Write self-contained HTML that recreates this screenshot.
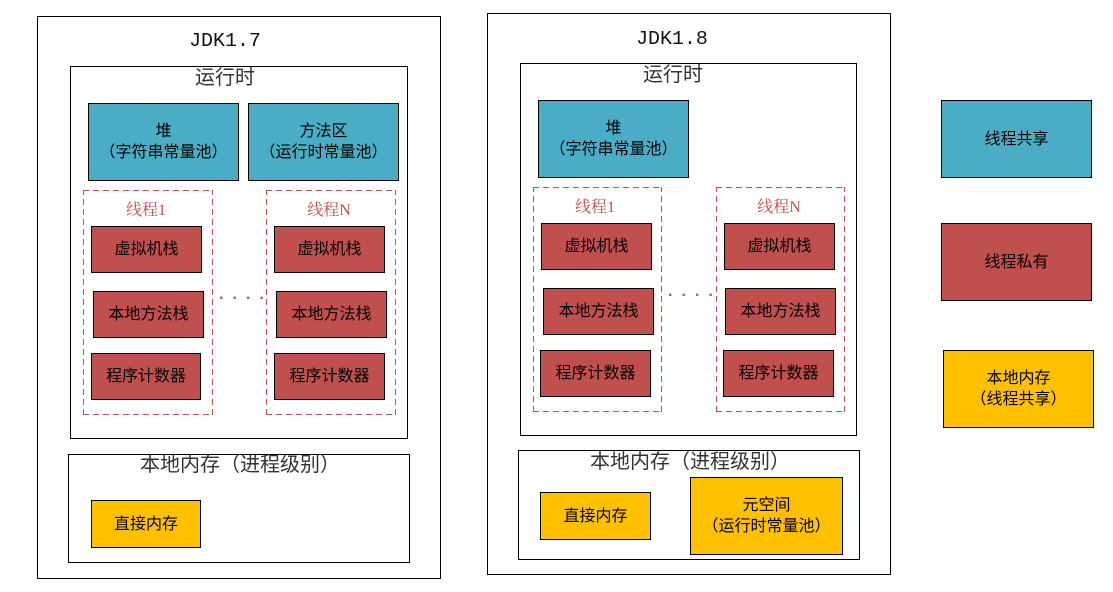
<!DOCTYPE html>
<html><head><meta charset="utf-8"><style>
body{margin:0;width:1113px;height:592px;background:#fff;position:relative;overflow:hidden;font-family:"Liberation Sans","Noto Sans CJK SC",sans-serif;}
div{position:absolute;box-sizing:border-box;}
.b{border:1px solid #000;background:#fff}
.c{display:flex;align-items:center;justify-content:center;text-align:center;font-size:16px;line-height:21px;color:#000;border:1px solid #000}
.bl{background:#4bacc6}.rd{background:#c0504d}.yl{background:#ffc000}
.d{background:
repeating-linear-gradient(90deg,#c0504d 0 6px,transparent 6px 10px) top/100% 1px no-repeat,
repeating-linear-gradient(90deg,#c0504d 0 6px,transparent 6px 10px) bottom/100% 1px no-repeat,
repeating-linear-gradient(0deg,#c0504d 0 6px,transparent 6px 10px) left/1px 100% no-repeat,
repeating-linear-gradient(0deg,#c0504d 0 6px,transparent 6px 10px) right/1px 100% no-repeat;}
.t{font-size:20px;color:#333;text-align:center;white-space:nowrap;line-height:24px}
.j{font-family:"Liberation Mono","Noto Sans CJK SC",monospace;font-size:19px;color:#111;text-align:center;transform:scaleX(1.05)}
.tl{color:#c0504d;font-size:16px;font-family:"Liberation Serif","Noto Serif CJK SC",serif;text-align:center}
.dots{font-size:16px;letter-spacing:9px;color:#c0504d;font-weight:bold}
</style></head><body>
<div class="b" style="left:37px;top:16px;width:404px;height:563px"></div>
<div class="j" style="left:125px;top:30px;width:200px">JDK1.7</div>
<div class="b" style="left:70px;top:66px;width:338px;height:373px"></div>
<div class="t" style="left:125px;top:66px;width:200px">运行时</div>
<div class="c bl" style="left:88px;top:103px;width:151px;height:78px">堆<br>（字符串常量池）</div>
<div class="c bl" style="left:248px;top:103px;width:151px;height:78px">方法区<br>（运行时常量池）</div>
<div class="d" style="left:83px;top:190px;width:130px;height:225px"></div>
<div class="d" style="left:266px;top:190px;width:130px;height:225px"></div>
<div class="tl" style="left:96px;top:197px;width:100px">线程1</div>
<div class="tl" style="left:279px;top:197px;width:100px">线程N</div>
<div class="c rd" style="left:91px;top:226px;width:111px;height:47px">虚拟机栈</div>
<div class="c rd" style="left:93px;top:291px;width:111px;height:47px">本地方法栈</div>
<div class="c rd" style="left:91px;top:353px;width:110px;height:47px">程序计数器</div>
<div class="c rd" style="left:274px;top:226px;width:111px;height:47px">虚拟机栈</div>
<div class="c rd" style="left:276px;top:291px;width:111px;height:47px">本地方法栈</div>
<div class="c rd" style="left:274px;top:353px;width:111px;height:47px">程序计数器</div>
<div class="dots" style="left:219px;top:286px">....</div>
<div class="b" style="left:68px;top:454px;width:342px;height:109px"></div>
<div class="t" style="left:100px;top:453px;width:280px">本地内存（进程级别）</div>
<div class="c yl" style="left:91px;top:500px;width:110px;height:48px">直接内存</div>

<div class="b" style="left:487px;top:13px;width:404px;height:562px"></div>
<div class="j" style="left:572px;top:28px;width:200px">JDK1.8</div>
<div class="b" style="left:520px;top:63px;width:337px;height:373px"></div>
<div class="t" style="left:573px;top:63px;width:200px">运行时</div>
<div class="c bl" style="left:538px;top:100px;width:151px;height:78px">堆<br>（字符串常量池）</div>
<div class="d" style="left:533px;top:187px;width:129px;height:225px"></div>
<div class="d" style="left:716px;top:187px;width:129px;height:225px"></div>
<div class="tl" style="left:545px;top:194px;width:100px">线程1</div>
<div class="tl" style="left:729px;top:194px;width:100px">线程N</div>
<div class="c rd" style="left:541px;top:223px;width:111px;height:47px">虚拟机栈</div>
<div class="c rd" style="left:543px;top:288px;width:111px;height:47px">本地方法栈</div>
<div class="c rd" style="left:540px;top:350px;width:111px;height:47px">程序计数器</div>
<div class="c rd" style="left:724px;top:223px;width:111px;height:47px">虚拟机栈</div>
<div class="c rd" style="left:725px;top:288px;width:111px;height:47px">本地方法栈</div>
<div class="c rd" style="left:723px;top:350px;width:111px;height:47px">程序计数器</div>
<div class="dots" style="left:668px;top:283px">....</div>
<div class="b" style="left:518px;top:450px;width:342px;height:110px"></div>
<div class="t" style="left:550px;top:450px;width:280px">本地内存（进程级别）</div>
<div class="c yl" style="left:540px;top:492px;width:111px;height:48px">直接内存</div>
<div class="c yl" style="left:690px;top:477px;width:153px;height:78px">元空间<br>（运行时常量池）</div>

<div class="c bl" style="left:941px;top:100px;width:151px;height:78px">线程共享</div>
<div class="c rd" style="left:941px;top:223px;width:151px;height:78px">线程私有</div>
<div class="c yl" style="left:943px;top:350px;width:151px;height:78px">本地内存<br>（线程共享）</div>
</body></html>
